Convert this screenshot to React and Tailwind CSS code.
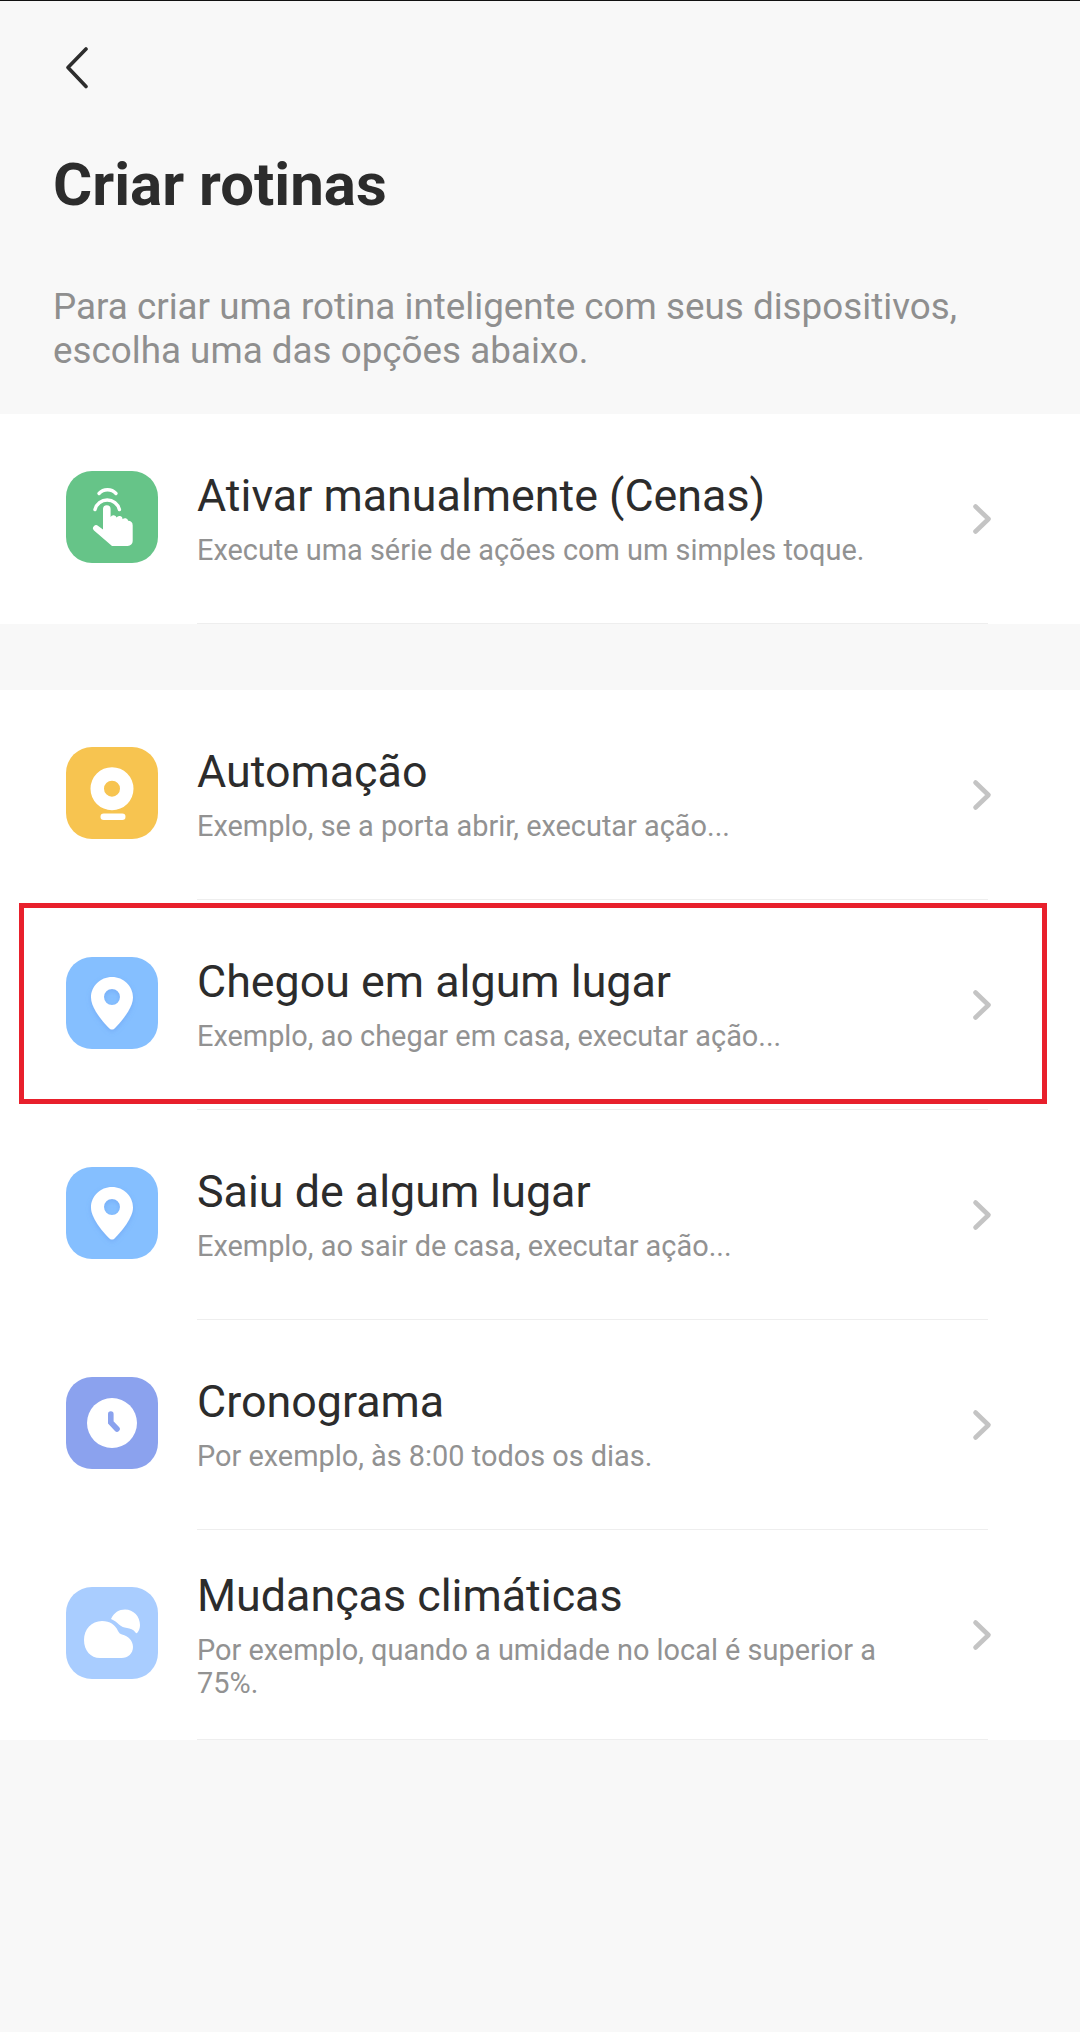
const Pin = () => (
  <svg viewBox="0 0 92 92" className="w-[92px] h-[92px]">
    <defs><filter id="ps" x="-30%" y="-30%" width="160%" height="160%"><feDropShadow dx="0" dy="2" stdDeviation="2.5" floodColor="#5b8fe8" floodOpacity="0.35" /></filter></defs>
    <path filter="url(#ps)" fillRule="evenodd" fill="#fff" d="M46 20C34.4 20 25 29.2 25 40.5C25 50.5 36 64 43.2 71.2a3.8 3.8 0 0 0 5.6 0C56 64 67 50.5 67 40.5C67 29.2 57.6 20 46 20ZM46 32a8 8 0 1 1 0 16a8 8 0 0 1 0-16Z" />
  </svg>
);
const Hand = () => (
  <svg viewBox="0 0 92 92" className="w-[92px] h-[92px]">
    <path fill="#fff" d="M37 38a3.8 3.8 0 0 1 7.6 0V46a3.2 3.2 0 0 1 6 .6a3.2 3.2 0 0 1 6 1.6a3.3 3.3 0 0 1 5.6 1.6c2.6 0 4.5 1.6 4.5 4.6V70a5 5 0 0 1-5 5H46L28 59.5a3 3 0 0 1 4.2-4.5L37 58.5Z" />
    <path fill="none" stroke="#fff" strokeWidth="3.4" strokeLinecap="round" d="M29 38.5a12.6 12.6 0 0 1 24.4 0" />
    <path fill="none" stroke="#fff" strokeWidth="3.4" strokeLinecap="round" d="M33 22.5c4.5-5 12.5-5 17 0" />
  </svg>
);
const Cam = () => (
  <svg viewBox="0 0 92 92" className="w-[92px] h-[92px]">
    <path fill="#fff" fillRule="evenodd" d="M46 20.2a21.5 21.5 0 1 1 0 43a21.5 21.5 0 0 1 0-43ZM46 33.7a8 8 0 1 0 0 16a8 8 0 0 0 0-16Z" />
    <rect x="34.5" y="66.5" width="25" height="6.5" rx="3.2" fill="#fff" />
  </svg>
);
const Clock = () => (
  <svg viewBox="0 0 92 92" className="w-[92px] h-[92px]">
    <circle cx="46" cy="46" r="25" fill="#fff" />
    <path fill="none" stroke="#8aa2ee" strokeWidth="5.6" strokeLinecap="round" d="M44.8 37V45.5L51 52" />
  </svg>
);
const Cloud = () => (
  <svg viewBox="0 0 92 92" className="w-[92px] h-[92px]">
    <path fill="#fff" d="M34 71C24.5 71 18 63.5 18 53C18 42.5 25.5 34 36 34C44 34 49.5 38 52 44C53 46 54.5 47.2 56 47.5C62.5 49 67 54 67 60C67 66.5 62 71 55.5 71Z" />
    <path fill="#fff" d="M45 32C48 25.5 53 22.5 59 22.5C67.5 22.5 74 29.5 74 38C74 41 73 43.5 71.5 45.5C70.8 46.5 70 46.3 69.5 45.5C67.5 42.5 64 41.5 61 41C57.5 40.5 56 40 53 37.5C51 35.5 48.5 33.5 45 32Z" />
  </svg>
);

const Row = ({ bg, icon, title, sub }) => (
  <div className="flex h-[210px] items-center">
    <div className={`mb-[4px] ml-[66px] flex h-[92px] w-[92px] shrink-0 items-center justify-center rounded-[26px] ${bg}`}>{icon}</div>
    <div className="ml-[39px] flex h-full w-[791px] items-center border-b border-[#eeeeee]">
      <div className="w-[690px] shrink-0">
        <div className="text-[44.8px] leading-[52px] text-[#2c2c2c]">{title}</div>
        <div className="mt-[12px] text-[28.9px] leading-[33px] text-[#929292]">{sub}</div>
      </div>
      <svg viewBox="0 0 24 36" className="ml-[84px] h-[36px] w-[24px] shrink-0">
        <path d="M4.5 5.5L17.5 18L4.5 30.5" fill="none" stroke="#c4c4c4" strokeWidth="4.6" strokeLinecap="round" strokeLinejoin="round" />
      </svg>
    </div>
  </div>
);

export default function App() {
  return (
    <div className="relative h-[2032px] w-[1080px] overflow-hidden bg-[#f8f8f8] font-['Roboto',sans-serif]">
      <div className="h-px bg-[#111111]" />
      <header className="h-[413px] pl-[53px] pt-[46px]">
        <svg viewBox="0 0 24 42" className="ml-[12px] h-[42px] w-[24px]">
          <path d="M21 2L3 20.5L21 39.5" fill="none" stroke="#2d2d2d" strokeWidth="3.6" strokeLinecap="round" strokeLinejoin="round" />
        </svg>
        <h1 className="mt-[61px] text-[60px] font-bold leading-[70px] text-[#2c2c2c]">Criar rotinas</h1>
        <p className="mt-[65px] text-[36.8px] leading-[44px] text-[#8f8f8f]">
          Para criar uma rotina inteligente com seus dispositivos,<br />escolha uma das opções abaixo.
        </p>
      </header>
      <section className="bg-white">
        <Row bg="bg-[#66c488]" icon={<Hand />} title="Ativar manualmente (Cenas)" sub="Execute uma série de ações com um simples toque." />
      </section>
      <section className="mt-[66px] bg-white">
        <Row bg="bg-[#f7c450]" icon={<Cam />} title="Automação" sub="Exemplo, se a porta abrir, executar ação..." />
        <Row bg="bg-[#85bfff]" icon={<Pin />} title="Chegou em algum lugar" sub="Exemplo, ao chegar em casa, executar ação..." />
        <Row bg="bg-[#85bfff]" icon={<Pin />} title="Saiu de algum lugar" sub="Exemplo, ao sair de casa, executar ação..." />
        <Row bg="bg-[#8ba2ee]" icon={<Clock />} title="Cronograma" sub="Por exemplo, às 8:00 todos os dias." />
        <Row bg="bg-[#a9cdff]" icon={<Cloud />} title="Mudanças climáticas" sub={<>Por exemplo, quando a umidade no local é superior a<br />75%.</>} />
      </section>
      <div className="absolute left-[19px] top-[903px] h-[201px] w-[1028px] border-[5px] border-[#e8202c]" />
    </div>
  );
}
